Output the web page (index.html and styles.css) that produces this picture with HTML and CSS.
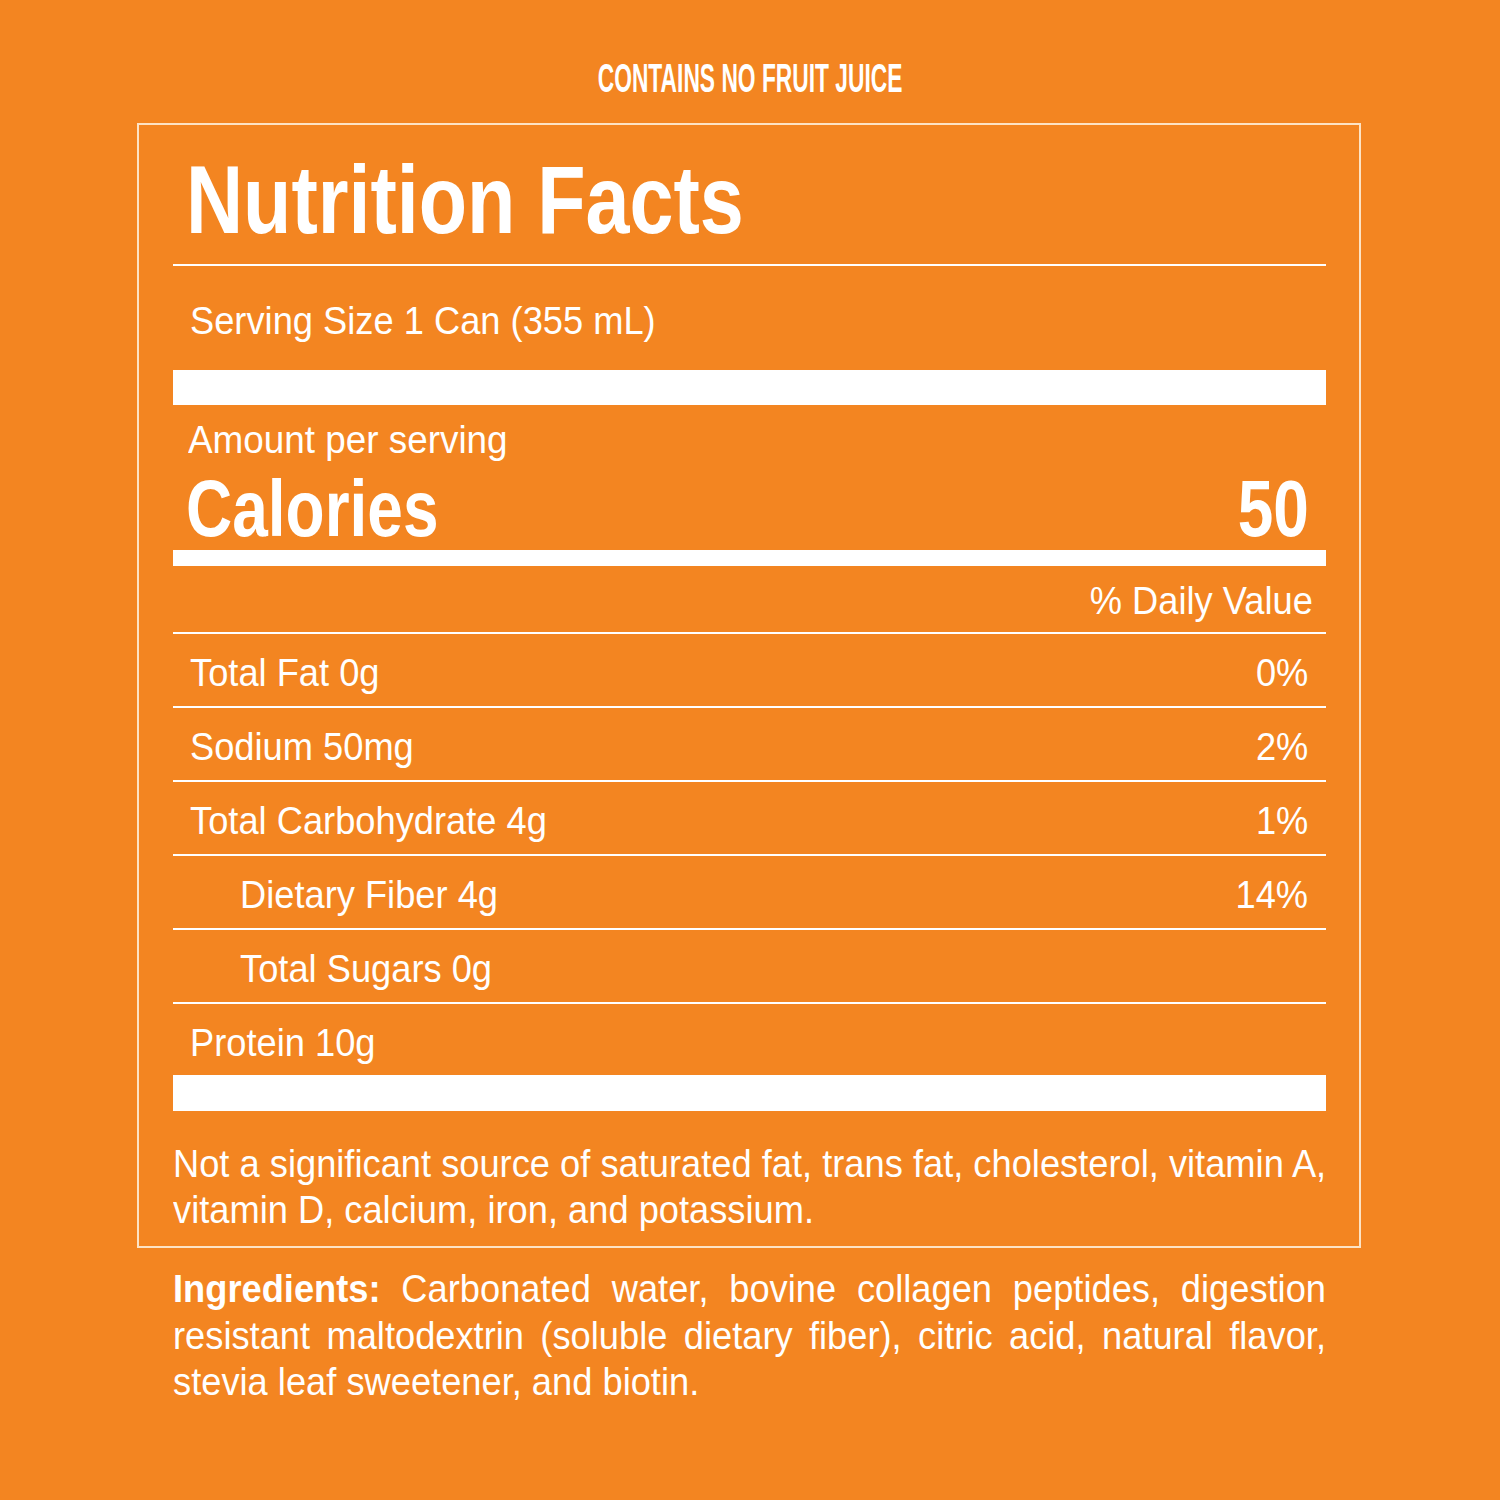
FILE: index.html
```html
<!DOCTYPE html>
<html>
<head>
<meta charset="utf-8">
<link rel="stylesheet" href="styles.css">
</head>
<body>
<div class="page">
  <div class="banner"><span class="banner-text">CONTAINS NO FRUIT JUICE</span></div>
  <div class="label">
    <div class="title"><span class="cond">Nutrition Facts</span></div>
    <div class="serving"><span class="cond">Serving Size 1 Can (355 mL)</span></div>
    <div class="bar bar-thick"></div>
    <div class="amount"><span class="cond">Amount per serving</span></div>
    <div class="calories"><span class="cond">Calories</span><span class="cond r">50</span></div>
    <div class="bar bar-mid"></div>
    <div class="dv-head"><span class="cond r">% Daily Value</span></div>
    <div class="row"><span class="cond">Total Fat 0g</span><span class="cond r">0%</span></div>
    <div class="row"><span class="cond">Sodium 50mg</span><span class="cond r">2%</span></div>
    <div class="row"><span class="cond">Total Carbohydrate 4g</span><span class="cond r">1%</span></div>
    <div class="row sub"><span class="cond">Dietary Fiber 4g</span><span class="cond r">14%</span></div>
    <div class="row sub"><span class="cond">Total Sugars 0g</span></div>
    <div class="row last"><span class="cond">Protein 10g</span></div>
    <div class="bar bar-bottom"></div>
    <div class="footnote">
      <span class="line">Not a significant source of saturated fat, trans fat, cholesterol, vitamin A,</span>
      <span class="line end">vitamin D, calcium, iron, and potassium.</span>
    </div>
  </div>
  <div class="ingredients">
    <span class="line"><b>Ingredients:</b> Carbonated water, bovine collagen peptides, digestion</span>
    <span class="line">resistant maltodextrin (soluble dietary fiber), citric acid, natural flavor,</span>
    <span class="line end">stevia leaf sweetener, and biotin.</span>
  </div>
</div>
</body>
</html>
```

FILE: styles.css
```css
html, body {
  margin: 0;
  padding: 0;
}
body {
  background: #f38521;
  color: #fff;
  font-family: "Liberation Sans", Arial, sans-serif;
  width: 1500px;
  height: 1500px;
  overflow: hidden;
}
.page {
  padding-top: 58px;
}
.cond {
  display: inline-block;
  white-space: nowrap;
  transform: scaleX(var(--sx, 0.93));
  transform-origin: left center;
}
.cond.r {
  transform-origin: right center;
}
.banner {
  display: flex;
  justify-content: center;
  height: 41px;
  margin-bottom: 24px;
}
.banner-text {
  display: inline-block;
  font-weight: bold;
  font-size: 41px;
  line-height: 41px;
  white-space: nowrap;
  transform: scaleX(0.556);
  transform-origin: center;
}
.label {
  margin-left: 137px;
  width: 1224px;
  box-sizing: border-box;
  border: 2px solid #fde3c4;
  padding: 0 33px 13px 34px;
}
.title {
  font-weight: bold;
  font-size: 97px;
  line-height: 97px;
  margin-top: 26px;
  padding-left: 13px;
  padding-bottom: 16px;
  border-bottom: 2px solid #fff;
  --sx: 0.815;
}
.serving,
.amount,
.dv-head,
.row {
  font-size: 39px;
  line-height: 48px;
}
.serving {
  padding: 31px 0 25px 17px;
}
.bar {
  background: #fff;
}
.bar-thick {
  height: 35px;
}
.bar-bottom {
  height: 36px;
}
.bar-mid {
  height: 16px;
  margin-top: 2px;
}
.amount {
  margin-top: 11px;
  padding-left: 15px;
  --sx: 0.945;
}
.calories {
  display: flex;
  justify-content: space-between;
  align-items: baseline;
  font-weight: bold;
  font-size: 79px;
  line-height: 79px;
  margin-top: 5px;
  padding: 0 17px 0 13px;
  --sx: 0.81;
}
.dv-head {
  text-align: right;
  padding: 11px 13px 7px 0;
  border-bottom: 2px solid #fff;
}
.row {
  display: flex;
  justify-content: space-between;
  padding: 15px 18px 9px 17px;
  border-bottom: 2px solid #fff;
}
.row.sub {
  padding-left: 67px;
}
.row.last {
  border-bottom: 0;
  padding-bottom: 8px;
}
.footnote {
  margin-top: 30px;
  font-size: 39px;
  line-height: 46px;
}
.line {
  display: block;
  width: calc(100% / 0.93);
  text-align: justify;
  text-align-last: justify;
  white-space: nowrap;
  transform: scaleX(0.93);
  transform-origin: left center;
}
.line.end {
  text-align-last: left;
}
.ingredients {
  margin: 18px 0 0 173px;
  width: 1153px;
  font-size: 39px;
  line-height: 46.5px;
}
.ingredients b {
  font-weight: bold;
}
```
